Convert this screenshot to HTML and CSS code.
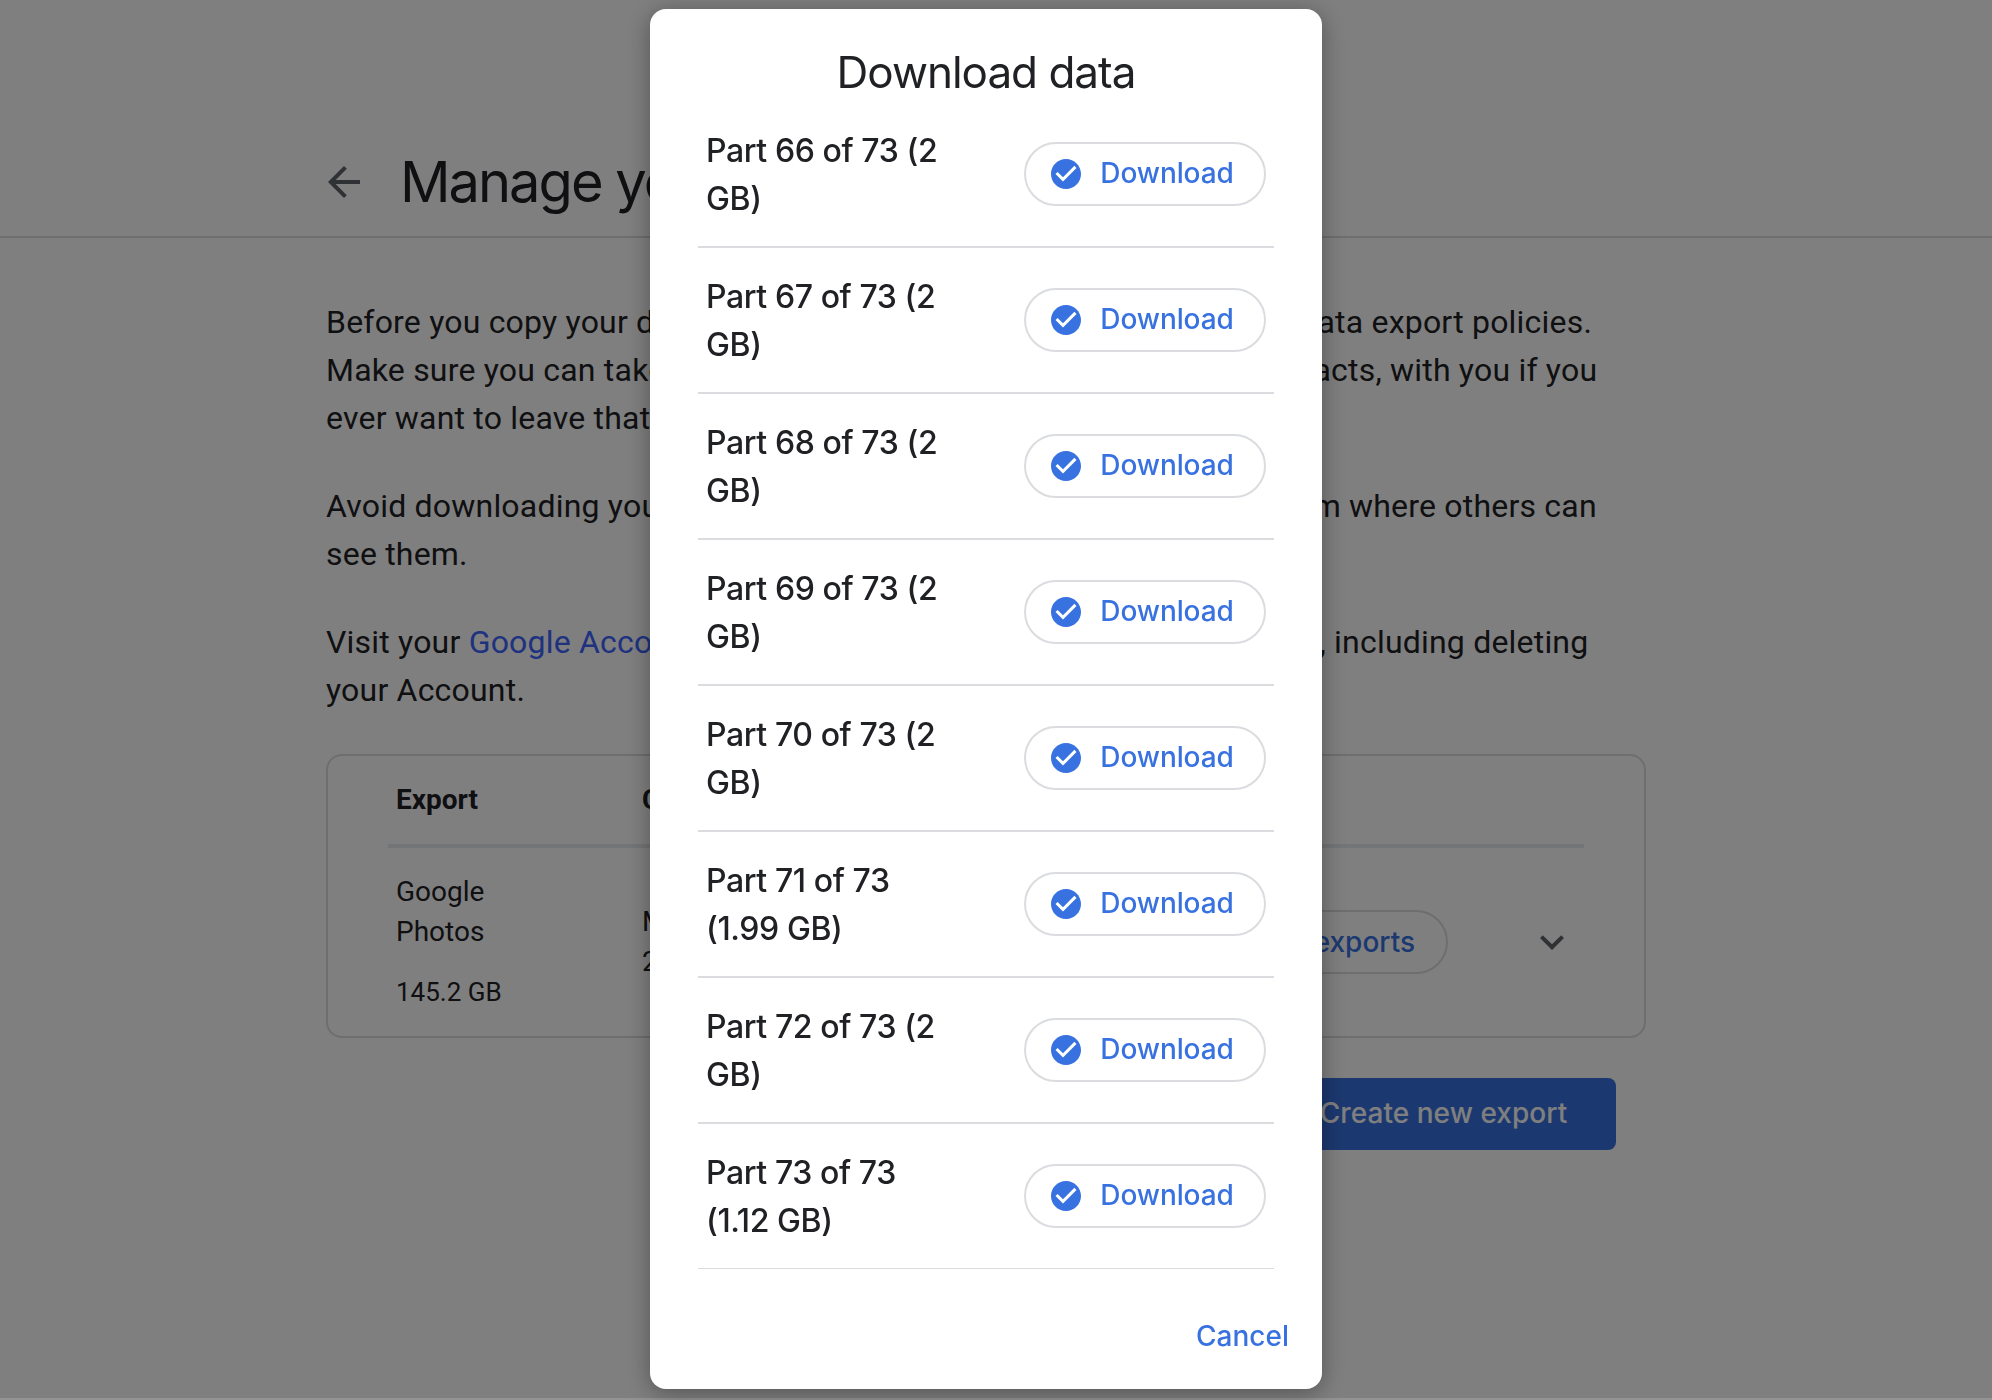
FILE: index.html
```html
<!DOCTYPE html>
<html lang="en">
<head>
<meta charset="utf-8">
<title>Manage your exports</title>
<link rel="stylesheet" href="styles.css">
</head>
<body>
<svg class="sprite" aria-hidden="true">
  <symbol id="check" viewBox="0 0 24 24"><path d="M12 2C6.48 2 2 6.48 2 12s4.48 10 10 10 10-4.48 10-10S17.52 2 12 2zm-2 15l-5-5 1.41-1.41L10 14.17l7.59-7.59L19 8l-9 9z"/></symbol>
</svg>
<div class="page">
  <header class="page-header">
    <svg class="back" viewBox="0 0 24 24"><path d="M20 11H7.83l5.59-5.59L12 4l-8 8 8 8 1.41-1.41L7.83 13H20v-2z"/></svg>
    <h1>Manage your exports</h1>
  </header>
  <main class="content">
    <p>Before you copy your data <span class="snug">to another service, consult each service's</span> data export policies.<br>Make sure you can take <span class="loose">your most important data, such as your</span> contacts, with you if you<br>ever want to leave that service.</p>
    <p>Avoid downloading your <span class="snug">archives on public computers and saving</span> them where others can<br>see them.</p>
    <p>Visit your <a href="#">Google Account</a> <span class="tight">to manage the rest of your account settings</span>, including deleting<br>your Account.</p>
    <section class="card">
      <div class="card-row card-head"><span>Export</span><span>Created on</span></div>
      <div class="card-row card-body">
        <div class="product"><span>Google<br>Photos</span><small>145.2 GB</small></div>
        <div class="created">May 12,<br>2024</div>
        <button class="pill show">Show exports</button>
        <svg class="chevron" viewBox="0 0 24 24"><path d="M7.41 8.59L12 13.17l4.59-4.58L18 10l-6 6-6-6z"/></svg>
      </div>
    </section>
    <button class="create">Create new export</button>
  </main>
</div>
<div class="overlay">
  <div class="dialog">
    <h2>Download data</h2>
    <ul class="parts">
      <li><span class="part">Part 66 of 73 (2<br>GB)</span><button class="pill"><svg><use href="#check"/></svg><span>Download</span></button></li>
      <li><span class="part">Part 67 of 73 (2<br>GB)</span><button class="pill"><svg><use href="#check"/></svg><span>Download</span></button></li>
      <li><span class="part">Part 68 of 73 (2<br>GB)</span><button class="pill"><svg><use href="#check"/></svg><span>Download</span></button></li>
      <li><span class="part">Part 69 of 73 (2<br>GB)</span><button class="pill"><svg><use href="#check"/></svg><span>Download</span></button></li>
      <li><span class="part">Part 70 of 73 (2<br>GB)</span><button class="pill"><svg><use href="#check"/></svg><span>Download</span></button></li>
      <li><span class="part">Part 71 of 73<br>(1.99 GB)</span><button class="pill"><svg><use href="#check"/></svg><span>Download</span></button></li>
      <li><span class="part">Part 72 of 73 (2<br>GB)</span><button class="pill"><svg><use href="#check"/></svg><span>Download</span></button></li>
      <li><span class="part">Part 73 of 73<br>(1.12 GB)</span><button class="pill"><svg><use href="#check"/></svg><span>Download</span></button></li>
    </ul>
    <div class="actions"><button class="cancel">Cancel</button></div>
  </div>
</div>
</body>
</html>
```
FILE: styles.css
```css
* { box-sizing: border-box; }
html, body { margin: 0; height: 1400px; overflow: hidden; }
body { font-family: Roboto, sans-serif; color: #202124; background: #fff; }
button { font: 500 28px/40px Inter, sans-serif; color: #3871e0; background: none; border: 0; padding: 0; margin: 0; white-space: nowrap; }
.sprite { display: none; }

.page { height: 1400px; }
.page-header { display: flex; align-items: center; gap: 32px; height: 238px; padding: 128px 0 0 320px; border-bottom: 2px solid #dadce0; }
.back { width: 48px; height: 48px; fill: #5f6368; }
h1 { margin: 0; font: 400 56px/72px Inter, sans-serif; letter-spacing: -2px; }

.content { width: 1320px; margin-left: 326px; padding-top: 60px; display: flex; flex-direction: column; gap: 40px; }
p { margin: 0; font-size: 32px; line-height: 48px; letter-spacing: .2px; white-space: nowrap; }
.snug { word-spacing: -1.4px; }
.loose { word-spacing: .7px; }
.tight { word-spacing: -2.2px; }
a { color: #3c64ff; text-decoration: none; }
.card { height: 284px; border: 2px solid #dadce0; border-radius: 16px; padding: 0 60px; font-size: 28px; line-height: 40px; }
.card-row { display: grid; grid-template-columns: 246px 1fr auto auto; padding-left: 8px; }
.card-head { height: 92px; border-bottom: 4px solid #e8eaed; padding-top: 24px; font-weight: 700; }
.card-body { height: 188px; align-items: center; }
.product { display: flex; flex-direction: column; gap: 20px; }
.product small { font-size: 26px; }
.show { margin-right: 80px; }
.chevron { width: 48px; height: 48px; margin-right: 8px; fill: #5f6368; }
.create { align-self: flex-end; width: 344px; height: 72px; margin-right: 30px; padding: 0 1px 2px 0; border-radius: 8px; background: #3871e0; color: #fff; letter-spacing: .05px; }

.pill { display: flex; align-items: center; justify-content: center; height: 64px; border: 2px solid #dadce0; border-radius: 32px; padding: 0 31px 0 22px; }
.pill svg { width: 36px; height: 36px; margin-right: 16px; fill: #3871e0; }
.pill span { padding-bottom: 2px; }

.overlay { position: fixed; inset: 0; background: rgba(0, 0, 0, .5); border-bottom: 2px solid #939393; display: flex; justify-content: center; align-items: flex-start; padding: 9px 20px 0 0; }
.dialog { flex: none; width: 672px; height: 1380px; background: #fff; border-radius: 16px; padding: 31px 48px; box-shadow: 0 4px 24px rgba(0, 0, 0, .35); }
h2 { margin: 0; height: 62px; text-align: center; font: 400 44px/64px Inter, sans-serif; letter-spacing: -1px; }
.parts { list-style: none; margin: 0; padding: 0; }
.parts li { display: flex; justify-content: space-between; align-items: center; height: 146px; padding: 0 8px; border-bottom: 2px solid #dadce0; }
.parts li:last-child { height: 145px; border-bottom-width: 1px; }
.part { padding-top: 1px; font: 500 32px/48px Inter, sans-serif; letter-spacing: -.4px; white-space: nowrap; }
.parts .pill { width: 242px; padding: 0 30px 0 22px; }
.parts .pill span { letter-spacing: -.1px; }
.actions { display: flex; justify-content: flex-end; margin: 47px -15px 0 0; }
```
